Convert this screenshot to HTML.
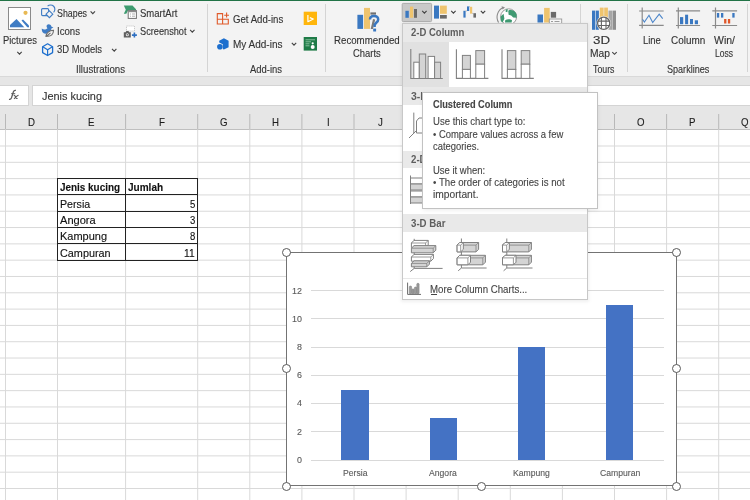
<!DOCTYPE html><html><head><meta charset="utf-8"><style>html,body{margin:0;padding:0;width:750px;height:500px;overflow:hidden;background:#fff;position:relative}body>div,body>svg{position:absolute}</style></head><body><div style="position:absolute;left:0px;top:0px;width:750px;height:1px;background:#217346"></div>
<div style="position:absolute;left:0px;top:1px;width:750px;height:75px;background:#f3f3f3"></div>
<div style="position:absolute;left:0px;top:76px;width:750px;height:1px;background:#d9d9d9"></div>
<div style="position:absolute;left:0px;top:77px;width:750px;height:30px;background:#e6e6e6"></div>
<div style="position:absolute;left:207px;top:4px;width:1px;height:68px;background:#d4d4d4"></div>
<div style="position:absolute;left:325px;top:4px;width:1px;height:68px;background:#d4d4d4"></div>
<div style="position:absolute;left:580px;top:4px;width:1px;height:68px;background:#d4d4d4"></div>
<div style="position:absolute;left:627px;top:4px;width:1px;height:68px;background:#d4d4d4"></div>
<div style="position:absolute;left:747px;top:4px;width:1px;height:68px;background:#d4d4d4"></div>
<div style="position:absolute;left:2.70px;top:35.91px;font:normal 10.32px/10.32px 'Liberation Sans',sans-serif;color:#333;white-space:pre;transform-origin:0 0;-webkit-text-stroke:0.12px #333;transform:scaleX(0.9100)">Pictures</div>
<div style="position:absolute;left:57.00px;top:8.81px;font:normal 10.32px/10.32px 'Liberation Sans',sans-serif;color:#333;white-space:pre;transform-origin:0 0;-webkit-text-stroke:0.12px #333;transform:scaleX(0.8577)">Shapes</div>
<div style="position:absolute;left:57.00px;top:27.11px;font:normal 10.32px/10.32px 'Liberation Sans',sans-serif;color:#333;white-space:pre;transform-origin:0 0;-webkit-text-stroke:0.12px #333;transform:scaleX(0.9331)">Icons</div>
<div style="position:absolute;left:57.00px;top:45.11px;font:normal 10.32px/10.32px 'Liberation Sans',sans-serif;color:#333;white-space:pre;transform-origin:0 0;-webkit-text-stroke:0.12px #333;transform:scaleX(0.9129)">3D Models</div>
<div style="position:absolute;left:76.00px;top:64.61px;font:normal 10.32px/10.32px 'Liberation Sans',sans-serif;color:#333;white-space:pre;transform-origin:0 0;-webkit-text-stroke:0.12px #333;transform:scaleX(0.9395)">Illustrations</div>
<div style="position:absolute;left:139.50px;top:8.61px;font:normal 10.32px/10.32px 'Liberation Sans',sans-serif;color:#333;white-space:pre;transform-origin:0 0;-webkit-text-stroke:0.12px #333;transform:scaleX(0.9218)">SmartArt</div>
<div style="position:absolute;left:139.50px;top:27.11px;font:normal 10.32px/10.32px 'Liberation Sans',sans-serif;color:#333;white-space:pre;transform-origin:0 0;-webkit-text-stroke:0.12px #333;transform:scaleX(0.8914)">Screenshot</div>
<div style="position:absolute;left:232.50px;top:14.91px;font:normal 10.32px/10.32px 'Liberation Sans',sans-serif;color:#333;white-space:pre;transform-origin:0 0;-webkit-text-stroke:0.12px #333;transform:scaleX(0.9329)">Get Add-ins</div>
<div style="position:absolute;left:232.50px;top:40.11px;font:normal 10.32px/10.32px 'Liberation Sans',sans-serif;color:#333;white-space:pre;transform-origin:0 0;-webkit-text-stroke:0.12px #333;transform:scaleX(0.9694)">My Add-ins</div>
<div style="position:absolute;left:250.00px;top:64.61px;font:normal 10.32px/10.32px 'Liberation Sans',sans-serif;color:#333;white-space:pre;transform-origin:0 0;-webkit-text-stroke:0.12px #333;transform:scaleX(0.9152)">Add-ins</div>
<div style="position:absolute;left:334.00px;top:35.81px;font:normal 10.32px/10.32px 'Liberation Sans',sans-serif;color:#333;white-space:pre;transform-origin:0 0;-webkit-text-stroke:0.12px #333;transform:scaleX(0.9395)">Recommended</div>
<div style="position:absolute;left:353.30px;top:48.81px;font:normal 10.32px/10.32px 'Liberation Sans',sans-serif;color:#333;white-space:pre;transform-origin:0 0;-webkit-text-stroke:0.12px #333;transform:scaleX(0.9120)">Charts</div>
<div style="position:absolute;left:593.00px;top:36.11px;font:normal 10.32px/10.32px 'Liberation Sans',sans-serif;color:#333;white-space:pre;transform-origin:0 0;-webkit-text-stroke:0.12px #333;transform:scaleX(1.2896)">3D</div>
<div style="position:absolute;left:590.00px;top:49.11px;font:normal 10.32px/10.32px 'Liberation Sans',sans-serif;color:#333;white-space:pre;transform-origin:0 0;-webkit-text-stroke:0.12px #333;transform:scaleX(0.9970)">Map</div>
<div style="position:absolute;left:593.00px;top:64.61px;font:normal 10.32px/10.32px 'Liberation Sans',sans-serif;color:#333;white-space:pre;transform-origin:0 0;-webkit-text-stroke:0.12px #333;transform:scaleX(0.8526)">Tours</div>
<div style="position:absolute;left:642.50px;top:35.81px;font:normal 10.32px/10.32px 'Liberation Sans',sans-serif;color:#333;white-space:pre;transform-origin:0 0;-webkit-text-stroke:0.12px #333;transform:scaleX(0.9130)">Line</div>
<div style="position:absolute;left:670.80px;top:35.81px;font:normal 10.32px/10.32px 'Liberation Sans',sans-serif;color:#333;white-space:pre;transform-origin:0 0;-webkit-text-stroke:0.12px #333;transform:scaleX(0.9624)">Column</div>
<div style="position:absolute;left:714.00px;top:35.81px;font:normal 10.32px/10.32px 'Liberation Sans',sans-serif;color:#333;white-space:pre;transform-origin:0 0;-webkit-text-stroke:0.12px #333;transform:scaleX(1.0182)">Win/</div>
<div style="position:absolute;left:715.00px;top:48.81px;font:normal 10.32px/10.32px 'Liberation Sans',sans-serif;color:#333;white-space:pre;transform-origin:0 0;-webkit-text-stroke:0.12px #333;transform:scaleX(0.8263)">Loss</div>
<div style="position:absolute;left:666.70px;top:64.61px;font:normal 10.32px/10.32px 'Liberation Sans',sans-serif;color:#333;white-space:pre;transform-origin:0 0;-webkit-text-stroke:0.12px #333;transform:scaleX(0.8785)">Sparklines</div>
<svg style="position:absolute;left:0;top:0" width="750" height="500"><rect x="8.5" y="7.5" width="22" height="22" fill="#fff" stroke="#8a8a8a" stroke-width="1"/><circle cx="25.5" cy="12.8" r="2.1" fill="#e8b954"/><path d="M10 27.5V25L16.5 19L24.5 27.5Z" fill="#3f7cc4"/><path d="M21.5 20.5L23 19.5L29 25.5V27.5H27.5Z" fill="#3f7cc4"/><rect x="9" y="27.6" width="21" height="1.4" fill="#fff"/><rect x="402.2" y="3.4" width="29.4" height="18.2" rx="1" fill="#c9c9c9" stroke="#ababab" stroke-width="1"/><rect x="405.4" y="10.8" width="3.4" height="7" fill="#3a78c1"/><rect x="410" y="6.6" width="3.2" height="11.2" fill="#efc46e"/><rect x="414" y="9" width="3" height="8.8" fill="#6a6a6a"/><path d="M17.3 51.9L19.5 54.1L21.7 51.9" fill="none" stroke="#444" stroke-width="1.15"/><path d="M90.6 11.4L92.8 13.6L95.0 11.4" fill="none" stroke="#444" stroke-width="1.15"/><path d="M112.0 48.9L114.2 51.1L116.4 48.9" fill="none" stroke="#444" stroke-width="1.15"/><path d="M190.10000000000002 29.9L192.3 32.1L194.5 29.9" fill="none" stroke="#444" stroke-width="1.15"/><path d="M291.8 42.9L294 45.1L296.2 42.9" fill="none" stroke="#444" stroke-width="1.15"/><path d="M422.2 10.9L424.4 13.1L426.59999999999997 10.9" fill="none" stroke="#444" stroke-width="1.15"/><path d="M451.2 10.9L453.4 13.1L455.59999999999997 10.9" fill="none" stroke="#444" stroke-width="1.15"/><path d="M480.8 10.9L483 13.1L485.2 10.9" fill="none" stroke="#444" stroke-width="1.15"/><path d="M612.3 52.1L614.5 54.300000000000004L616.7 52.1" fill="none" stroke="#444" stroke-width="1.15"/><rect x="41.6" y="8.6" width="7" height="7" rx="1" fill="none" stroke="#3f7cc4" stroke-width="1.1"/><path d="M47.6 6.2A4.1 4.1 0 1 1 53.6 12.3" fill="none" stroke="#3f7cc4" stroke-width="1.1"/><path d="M49.4 10.8L52.8 14.2L49.4 17.6L46 14.2Z" fill="#f3f3f3" stroke="#3f7cc4" stroke-width="1.1"/><path d="M41.8 28.6C43 29.5 44.5 29.8 46 29.2L47.5 28.2C46.6 27.4 46.3 26.4 46.8 25.3C47.5 24.2 49.2 23.9 50.3 24.8C51 25.3 51.3 25.9 51.3 26.5L53.4 27.6L51.4 28.6C51.3 31.2 49 33.8 45.4 33.8C43 33.8 41.6 31.6 41.8 28.6Z" fill="#3f7cc4"/><path d="M45.8 36.8C46.4 33 48.6 30.5 53.5 30.3C53.5 34.3 51 36.6 47.2 36.2M46.3 36.5L50.5 32.8" fill="#f3f3f3" stroke="#6d6d6d" stroke-width="1.1"/><path d="M47.6 43.8L52.6 46.7V52.6L47.6 55.5L42.6 52.6V46.7Z" fill="none" stroke="#1d6fce" stroke-width="1.3" stroke-linejoin="round"/><path d="M42.8 46.8L47.6 49.7L52.4 46.8M47.6 49.7V55.3" fill="none" stroke="#1d6fce" stroke-width="1.2"/><path d="M123.8 5.6H132.5L136 9.2V10.5H128L126.3 13.8H123.8L125.8 9.7Z" fill="#3d9b6f"/><rect x="128.2" y="10.6" width="8.2" height="7.8" fill="#fff" stroke="#707070" stroke-width="1"/><rect x="128.2" y="10.6" width="8.2" height="1.6" fill="#8c8c8c"/><path d="M130 14H131M132 14H135M130 16.2H131M132 16.2H135" stroke="#8c8c8c" stroke-width="0.7"/><rect x="126.5" y="26" width="8" height="5" fill="#fff" stroke="#b5b5b5" stroke-width="0.7" stroke-dasharray="1.2 0.8"/><path d="M123.8 32.2H125.5L126.4 31H128.4L129.2 32.2H130.8V37.4H123.8Z" fill="#5f5f5f"/><circle cx="127.3" cy="34.7" r="1.5" fill="#f3f3f3"/><circle cx="127.3" cy="34.7" r="0.8" fill="#5f5f5f"/><path d="M131.9 35.1H136.9M134.4 32.6V37.6" stroke="#2e6fc1" stroke-width="1.6"/><path d="M217.3 13.6H222.6V19.3H228.3V24H217.3Z M217.3 19.3H222.6 M222.6 19.3V24" fill="none" stroke="#e05a2a" stroke-width="1.1"/><path d="M224.2 15.2H229 M226.6 12.6V17.6" stroke="#e05a2a" stroke-width="1.1"/><path d="M219.2 40.8L223.9 38.3L228.6 40.8V47.2L223.9 49.6L222.8 49.1V44.3L219.2 42.4Z" fill="#1d6fce"/><circle cx="219.9" cy="46.8" r="2.8" fill="#1d6fce"/><rect x="303.7" y="11.7" width="13.3" height="13.3" fill="#ffb60c"/><path d="M307.9 15V21.7L313.3 19L309.8 17.6" fill="none" stroke="#fff" stroke-width="1.2" stroke-linejoin="round"/><rect x="303.7" y="37" width="13.3" height="13.6" fill="#1e7b47"/><path d="M305.5 39.8H315M305.5 41.8H311M305.5 43.8H309.5M305.5 45.8H309.5" stroke="#9fd0b1" stroke-width="0.8"/><circle cx="312.7" cy="43.3" r="1.1" fill="#fff"/><circle cx="312.7" cy="47" r="2" fill="#fff"/><rect x="357.4" y="14.8" width="5.7" height="14.1" fill="#3a78c1"/><rect x="364" y="7.9" width="6" height="21" fill="#efc46e"/><rect x="370.4" y="12.4" width="5.6" height="2.2" fill="#707070"/><path d="M370.7 28.9L373 19L375.2 19.5L373 28.9Z" fill="#7a7a7a"/><path d="M370 19.5C370 17 371.8 15.9 373.9 15.9C376.3 15.9 378.2 17.2 378.2 19.4C378.2 22.4 374.6 22.6 374.6 25.8V27" fill="none" stroke="#3a78c1" stroke-width="2.5"/><rect x="373.2" y="28.6" width="2.9" height="2.9" fill="#3a78c1"/><rect x="434" y="5.6" width="5" height="13" fill="#3a78c1"/><rect x="440" y="5.6" width="6.8" height="8.2" fill="#efc46e"/><rect x="440" y="15" width="6.8" height="3.6" fill="#6a6a6a"/><rect x="463.4" y="10.8" width="2.2" height="6.8" fill="#3a78c1"/><rect x="467" y="6.4" width="2.2" height="4.6" fill="#3a78c1"/><rect x="470" y="6.8" width="2.2" height="6.8" fill="#efc46e"/><rect x="473.4" y="13.2" width="2.6" height="4.4" fill="#6a6a6a"/><path d="M465.6 10.9H467M469.2 6.7H470M472.2 13.4H473.4" stroke="#888" stroke-width="0.5"/><path d="M498.6 22.5A10.2 10.2 0 0 1 503.5 7.6" fill="none" stroke="#8c8c8c" stroke-width="1.1"/><path d="M501.5 6.2L505 7.3L502.6 9.6Z" fill="#8c8c8c"/><circle cx="508.6" cy="16.8" r="8" fill="#fff" stroke="#9a9a9a" stroke-width="1"/><path d="M508.2 10.6C511.5 9.2 515.5 10.8 516.6 14.5L516.6 17.8L513.2 17.4L511.2 15.6L508.6 14.8Z M505.8 9.6L507.8 9.3L507.4 12.2L505.6 11.8Z M500.6 16.4L503.6 13.8L504.4 18.8L502.6 22.4L500.8 21Z M505.2 20.2C507.2 19 510.6 19.2 512 20.2L511.6 22.6H505Z" fill="#3f9a72"/><rect x="537.5" y="14.5" width="5.5" height="8" fill="#3a78c1"/><rect x="544.1" y="7.9" width="5.6" height="14.6" fill="#efc46e"/><rect x="550.8" y="11.9" width="5.3" height="5.8" fill="#6a6a6a"/><rect x="549.3" y="19" width="12.4" height="5" fill="#f8f8f8" stroke="#9a9a9a" stroke-width="0.9"/><path d="M551 21.5H553M554.5 21.5H559.5" stroke="#888" stroke-width="0.8"/><rect x="592" y="10.6" width="3.2" height="19.2" fill="#3a78c1"/><rect x="595.8" y="10.6" width="3.1" height="19.2" fill="#3a78c1"/><rect x="599.8" y="7.6" width="3.8" height="12" fill="#efc46e"/><rect x="604.2" y="7.6" width="3.7" height="12" fill="#efc46e"/><rect x="608.5" y="10.6" width="3.6" height="19.2" fill="#a6a6a6"/><rect x="612.5" y="10.6" width="3.5" height="19.2" fill="#8f8f8f"/><circle cx="603.7" cy="23.3" r="7.2" fill="#f3f3f3"/><circle cx="603.7" cy="23.3" r="6.1" fill="#fff" stroke="#666" stroke-width="1.3"/><path d="M598 21.1H609.4M598 25.5H609.4M601.4 17.5V29.1M606 17.5V29.1" stroke="#666" stroke-width="1.1"/><path d="M639.1 11H663.7M639.1 25.4H663.7M642.2 7.4V28.6" stroke="#8a8a8a" stroke-width="1.2"/><path d="M642.5 19.3L644.4 22L649 15.3L652.7 22.6L659.2 14.2L662.7 18.7" fill="none" stroke="#4b85c9" stroke-width="1.1"/><path d="M676 10.8H700.1M676 25.5H700.1M678.3 7.4V28.6" stroke="#8a8a8a" stroke-width="1.2"/><rect x="680" y="17.1" width="3.2000000000000455" height="7.099999999999998" fill="#3a78c1"/><rect x="685.1" y="14.7" width="3.0" height="9.5" fill="#3a78c1"/><rect x="690" y="19" width="3" height="5.199999999999999" fill="#3a78c1"/><rect x="694.8" y="20.3" width="3.2000000000000455" height="3.8999999999999986" fill="#3a78c1"/><path d="M712.3 10.8H737.1M712.3 25.5H737.1M715.5 7.4V28.6" stroke="#8a8a8a" stroke-width="1.2"/><rect x="716.9" y="13" width="2.3" height="4.6" fill="#3a78c1"/><rect x="721" y="13" width="2.3" height="4.6" fill="#3a78c1"/><rect x="732.3" y="13" width="2.3" height="4.6" fill="#3a78c1"/><rect x="724.1" y="19" width="2.3" height="4.5" fill="#e0572a"/><rect x="727.9" y="19" width="2.3" height="4.5" fill="#e0572a"/></svg>
<div style="position:absolute;left:-2px;top:85px;width:30.5px;height:21px;background:#fff;border:1px solid #d4d4d4;box-sizing:border-box"></div>
<div style="position:absolute;left:32px;top:85px;width:730px;height:21px;background:#fff;border:1px solid #d4d4d4;box-sizing:border-box"></div>
<div style="position:absolute;left:41.70px;top:91.09px;font:normal 11.05px/11.05px 'Liberation Sans',sans-serif;color:#333;white-space:pre;transform-origin:0 0;-webkit-text-stroke:0.12px #333;transform:scaleX(0.9870)">Jenis kucing</div>
<svg style="position:absolute;left:0;top:0" width="750" height="500"><path d="M9 99.4C10.3 99.7 11 99.2 11.5 97.8L13.4 91.8C13.8 90.6 14.6 90.1 15.9 90.4" fill="none" stroke="#5a5a5a" stroke-width="1.25"/><path d="M11.2 93.7H15.2" stroke="#5a5a5a" stroke-width="1"/><path d="M13.6 95.2C14.6 95 15.2 95.6 15.6 97.2C15.9 98.4 16.6 98.8 17.6 98.4M18.6 95.2C17.4 95.3 15.4 97.3 14 98.8" fill="none" stroke="#5a5a5a" stroke-width="1.05"/></svg>
<div style="position:absolute;left:0px;top:107px;width:750px;height:22px;background:#e6e6e6"></div>
<div style="position:absolute;left:0px;top:129px;width:750px;height:1px;background:#bfbfbf"></div>
<svg style="position:absolute;left:0;top:0" width="750" height="500"><path d="M5.5 114V129" stroke="#b8b8b8" stroke-width="1"/><path d="M57.5 114V129" stroke="#b8b8b8" stroke-width="1"/><path d="M125.6 114V129" stroke="#b8b8b8" stroke-width="1"/><path d="M197.7 114V129" stroke="#b8b8b8" stroke-width="1"/><path d="M249.79999999999998 114V129" stroke="#b8b8b8" stroke-width="1"/><path d="M301.9 114V129" stroke="#b8b8b8" stroke-width="1"/><path d="M354.0 114V129" stroke="#b8b8b8" stroke-width="1"/><path d="M406.1 114V129" stroke="#b8b8b8" stroke-width="1"/><path d="M458.2 114V129" stroke="#b8b8b8" stroke-width="1"/><path d="M510.3 114V129" stroke="#b8b8b8" stroke-width="1"/><path d="M562.4 114V129" stroke="#b8b8b8" stroke-width="1"/><path d="M614.5 114V129" stroke="#b8b8b8" stroke-width="1"/><path d="M666.6 114V129" stroke="#b8b8b8" stroke-width="1"/><path d="M718.7 114V129" stroke="#b8b8b8" stroke-width="1"/><path d="M770.8 114V129" stroke="#b8b8b8" stroke-width="1"/><path d="M0 146.00H750" stroke="#d9d9d9" stroke-width="1"/><path d="M0 162.31H750" stroke="#d9d9d9" stroke-width="1"/><path d="M0 178.62H750" stroke="#d9d9d9" stroke-width="1"/><path d="M0 194.93H750" stroke="#d9d9d9" stroke-width="1"/><path d="M0 211.24H750" stroke="#d9d9d9" stroke-width="1"/><path d="M0 227.55H750" stroke="#d9d9d9" stroke-width="1"/><path d="M0 243.86H750" stroke="#d9d9d9" stroke-width="1"/><path d="M0 260.17H750" stroke="#d9d9d9" stroke-width="1"/><path d="M0 276.48H750" stroke="#d9d9d9" stroke-width="1"/><path d="M0 292.79H750" stroke="#d9d9d9" stroke-width="1"/><path d="M0 309.10H750" stroke="#d9d9d9" stroke-width="1"/><path d="M0 325.41H750" stroke="#d9d9d9" stroke-width="1"/><path d="M0 341.72H750" stroke="#d9d9d9" stroke-width="1"/><path d="M0 358.03H750" stroke="#d9d9d9" stroke-width="1"/><path d="M0 374.34H750" stroke="#d9d9d9" stroke-width="1"/><path d="M0 390.65H750" stroke="#d9d9d9" stroke-width="1"/><path d="M0 406.96H750" stroke="#d9d9d9" stroke-width="1"/><path d="M0 423.27H750" stroke="#d9d9d9" stroke-width="1"/><path d="M0 439.58H750" stroke="#d9d9d9" stroke-width="1"/><path d="M0 455.89H750" stroke="#d9d9d9" stroke-width="1"/><path d="M0 472.20H750" stroke="#d9d9d9" stroke-width="1"/><path d="M0 488.51H750" stroke="#d9d9d9" stroke-width="1"/><path d="M5.5 129.5V500" stroke="#d9d9d9" stroke-width="1"/><path d="M57.5 129.5V500" stroke="#d9d9d9" stroke-width="1"/><path d="M125.6 129.5V500" stroke="#d9d9d9" stroke-width="1"/><path d="M197.7 129.5V500" stroke="#d9d9d9" stroke-width="1"/><path d="M249.79999999999998 129.5V500" stroke="#d9d9d9" stroke-width="1"/><path d="M301.9 129.5V500" stroke="#d9d9d9" stroke-width="1"/><path d="M354.0 129.5V500" stroke="#d9d9d9" stroke-width="1"/><path d="M406.1 129.5V500" stroke="#d9d9d9" stroke-width="1"/><path d="M458.2 129.5V500" stroke="#d9d9d9" stroke-width="1"/><path d="M510.3 129.5V500" stroke="#d9d9d9" stroke-width="1"/><path d="M562.4 129.5V500" stroke="#d9d9d9" stroke-width="1"/><path d="M614.5 129.5V500" stroke="#d9d9d9" stroke-width="1"/><path d="M666.6 129.5V500" stroke="#d9d9d9" stroke-width="1"/><path d="M718.7 129.5V500" stroke="#d9d9d9" stroke-width="1"/><path d="M770.8 129.5V500" stroke="#d9d9d9" stroke-width="1"/></svg>
<div style="position:absolute;left:28.01px;top:117.04px;font:normal 10.76px/10.76px 'Liberation Sans',sans-serif;color:#1e1e1e;white-space:pre;transform-origin:0 0;-webkit-text-stroke:0.12px #1e1e1e;transform:scaleX(0.9000)">D</div>
<div style="position:absolute;left:88.32px;top:117.04px;font:normal 10.76px/10.76px 'Liberation Sans',sans-serif;color:#1e1e1e;white-space:pre;transform-origin:0 0;-webkit-text-stroke:0.12px #1e1e1e;transform:scaleX(0.9000)">E</div>
<div style="position:absolute;left:158.70px;top:117.04px;font:normal 10.76px/10.76px 'Liberation Sans',sans-serif;color:#1e1e1e;white-space:pre;transform-origin:0 0;-webkit-text-stroke:0.12px #1e1e1e;transform:scaleX(0.9000)">F</div>
<div style="position:absolute;left:219.99px;top:117.04px;font:normal 10.76px/10.76px 'Liberation Sans',sans-serif;color:#1e1e1e;white-space:pre;transform-origin:0 0;-webkit-text-stroke:0.12px #1e1e1e;transform:scaleX(0.9000)">G</div>
<div style="position:absolute;left:272.36px;top:117.04px;font:normal 10.76px/10.76px 'Liberation Sans',sans-serif;color:#1e1e1e;white-space:pre;transform-origin:0 0;-webkit-text-stroke:0.12px #1e1e1e;transform:scaleX(0.9000)">H</div>
<div style="position:absolute;left:326.61px;top:117.04px;font:normal 10.76px/10.76px 'Liberation Sans',sans-serif;color:#1e1e1e;white-space:pre;transform-origin:0 0;-webkit-text-stroke:0.12px #1e1e1e;transform:scaleX(0.9000)">I</div>
<div style="position:absolute;left:377.63px;top:117.04px;font:normal 10.76px/10.76px 'Liberation Sans',sans-serif;color:#1e1e1e;white-space:pre;transform-origin:0 0;-webkit-text-stroke:0.12px #1e1e1e;transform:scaleX(0.9000)">J</div>
<div style="position:absolute;left:428.92px;top:117.04px;font:normal 10.76px/10.76px 'Liberation Sans',sans-serif;color:#1e1e1e;white-space:pre;transform-origin:0 0;-webkit-text-stroke:0.12px #1e1e1e;transform:scaleX(0.9000)">K</div>
<div style="position:absolute;left:481.56px;top:117.04px;font:normal 10.76px/10.76px 'Liberation Sans',sans-serif;color:#1e1e1e;white-space:pre;transform-origin:0 0;-webkit-text-stroke:0.12px #1e1e1e;transform:scaleX(0.9000)">L</div>
<div style="position:absolute;left:532.32px;top:117.04px;font:normal 10.76px/10.76px 'Liberation Sans',sans-serif;color:#1e1e1e;white-space:pre;transform-origin:0 0;-webkit-text-stroke:0.12px #1e1e1e;transform:scaleX(0.9000)">M</div>
<div style="position:absolute;left:584.96px;top:117.04px;font:normal 10.76px/10.76px 'Liberation Sans',sans-serif;color:#1e1e1e;white-space:pre;transform-origin:0 0;-webkit-text-stroke:0.12px #1e1e1e;transform:scaleX(0.9000)">N</div>
<div style="position:absolute;left:636.79px;top:117.04px;font:normal 10.76px/10.76px 'Liberation Sans',sans-serif;color:#1e1e1e;white-space:pre;transform-origin:0 0;-webkit-text-stroke:0.12px #1e1e1e;transform:scaleX(0.9000)">O</div>
<div style="position:absolute;left:689.42px;top:117.04px;font:normal 10.76px/10.76px 'Liberation Sans',sans-serif;color:#1e1e1e;white-space:pre;transform-origin:0 0;-webkit-text-stroke:0.12px #1e1e1e;transform:scaleX(0.9000)">P</div>
<div style="position:absolute;left:740.99px;top:117.04px;font:normal 10.76px/10.76px 'Liberation Sans',sans-serif;color:#1e1e1e;white-space:pre;transform-origin:0 0;-webkit-text-stroke:0.12px #1e1e1e;transform:scaleX(0.9000)">Q</div>
<div style="position:absolute;left:57px;top:178px;width:1px;height:83px;background:#222"></div>
<div style="position:absolute;left:125px;top:178px;width:1px;height:83px;background:#222"></div>
<div style="position:absolute;left:197px;top:178px;width:1px;height:83px;background:#222"></div>
<div style="position:absolute;left:57px;top:178px;width:141px;height:1px;background:#222"></div>
<div style="position:absolute;left:57px;top:194px;width:141px;height:1px;background:#222"></div>
<div style="position:absolute;left:57px;top:211px;width:141px;height:1px;background:#222"></div>
<div style="position:absolute;left:57px;top:227px;width:141px;height:1px;background:#222"></div>
<div style="position:absolute;left:57px;top:243px;width:141px;height:1px;background:#222"></div>
<div style="position:absolute;left:57px;top:260px;width:141px;height:1px;background:#222"></div>
<div style="position:absolute;left:59.50px;top:183.26px;font:bold 10.03px/10.03px 'Liberation Sans',sans-serif;color:#111;white-space:pre;transform-origin:0 0;-webkit-text-stroke:0.12px #111;transform:scaleX(0.9889)">Jenis kucing</div>
<div style="position:absolute;left:127.90px;top:183.26px;font:bold 10.03px/10.03px 'Liberation Sans',sans-serif;color:#111;white-space:pre;transform-origin:0 0;-webkit-text-stroke:0.12px #111;transform:scaleX(1.0010)">Jumlah</div>
<div style="position:absolute;left:59.50px;top:199.56px;font:normal 10.03px/10.03px 'Liberation Sans',sans-serif;color:#111;white-space:pre;transform-origin:0 0;-webkit-text-stroke:0.12px #111;transform:scaleX(1.0638)">Persia</div>
<div style="position:absolute;left:189.70px;top:199.56px;font:normal 10.03px/10.03px 'Liberation Sans',sans-serif;color:#111;white-space:pre;transform-origin:0 0;-webkit-text-stroke:0.12px #111;transform:scaleX(0.9515)">5</div>
<div style="position:absolute;left:59.50px;top:215.89px;font:normal 10.03px/10.03px 'Liberation Sans',sans-serif;color:#111;white-space:pre;transform-origin:0 0;-webkit-text-stroke:0.12px #111;transform:scaleX(1.1054)">Angora</div>
<div style="position:absolute;left:189.70px;top:215.89px;font:normal 10.03px/10.03px 'Liberation Sans',sans-serif;color:#111;white-space:pre;transform-origin:0 0;-webkit-text-stroke:0.12px #111;transform:scaleX(0.9515)">3</div>
<div style="position:absolute;left:59.50px;top:232.22px;font:normal 10.03px/10.03px 'Liberation Sans',sans-serif;color:#111;white-space:pre;transform-origin:0 0;-webkit-text-stroke:0.12px #111;transform:scaleX(1.0962)">Kampung</div>
<div style="position:absolute;left:189.70px;top:232.22px;font:normal 10.03px/10.03px 'Liberation Sans',sans-serif;color:#111;white-space:pre;transform-origin:0 0;-webkit-text-stroke:0.12px #111;transform:scaleX(0.9515)">8</div>
<div style="position:absolute;left:59.50px;top:248.55px;font:normal 10.03px/10.03px 'Liberation Sans',sans-serif;color:#111;white-space:pre;transform-origin:0 0;-webkit-text-stroke:0.12px #111;transform:scaleX(1.0821)">Campuran</div>
<div style="position:absolute;left:184.40px;top:248.55px;font:normal 10.03px/10.03px 'Liberation Sans',sans-serif;color:#111;white-space:pre;transform-origin:0 0;-webkit-text-stroke:0.12px #111;transform:scaleX(1.0196)">11</div>
<div style="position:absolute;left:285.8px;top:251.8px;width:390.9px;height:234.4px;background:#fff;border:1.3px solid #737373;box-sizing:border-box"></div>
<div style="position:absolute;left:310.5px;top:460px;width:353.5px;height:1px;background:#d9d9d9"></div>
<div style="position:absolute;left:296.66px;top:454.78px;font:normal 9.88px/9.88px 'Liberation Sans',sans-serif;color:#595959;white-space:pre;transform-origin:0 0;-webkit-text-stroke:0.12px #595959;transform:scaleX(0.9000)">0</div>
<div style="position:absolute;left:310.5px;top:431px;width:353.5px;height:1px;background:#d9d9d9"></div>
<div style="position:absolute;left:296.66px;top:426.58px;font:normal 9.88px/9.88px 'Liberation Sans',sans-serif;color:#595959;white-space:pre;transform-origin:0 0;-webkit-text-stroke:0.12px #595959;transform:scaleX(0.9000)">2</div>
<div style="position:absolute;left:310.5px;top:403px;width:353.5px;height:1px;background:#d9d9d9"></div>
<div style="position:absolute;left:296.66px;top:398.38px;font:normal 9.88px/9.88px 'Liberation Sans',sans-serif;color:#595959;white-space:pre;transform-origin:0 0;-webkit-text-stroke:0.12px #595959;transform:scaleX(0.9000)">4</div>
<div style="position:absolute;left:310.5px;top:375px;width:353.5px;height:1px;background:#d9d9d9"></div>
<div style="position:absolute;left:296.66px;top:370.18px;font:normal 9.88px/9.88px 'Liberation Sans',sans-serif;color:#595959;white-space:pre;transform-origin:0 0;-webkit-text-stroke:0.12px #595959;transform:scaleX(0.9000)">6</div>
<div style="position:absolute;left:310.5px;top:347px;width:353.5px;height:1px;background:#d9d9d9"></div>
<div style="position:absolute;left:296.66px;top:341.98px;font:normal 9.88px/9.88px 'Liberation Sans',sans-serif;color:#595959;white-space:pre;transform-origin:0 0;-webkit-text-stroke:0.12px #595959;transform:scaleX(0.9000)">8</div>
<div style="position:absolute;left:310.5px;top:318px;width:353.5px;height:1px;background:#d9d9d9"></div>
<div style="position:absolute;left:291.71px;top:313.78px;font:normal 9.88px/9.88px 'Liberation Sans',sans-serif;color:#595959;white-space:pre;transform-origin:0 0;-webkit-text-stroke:0.12px #595959;transform:scaleX(0.9000)">10</div>
<div style="position:absolute;left:310.5px;top:290px;width:353.5px;height:1px;background:#d9d9d9"></div>
<div style="position:absolute;left:291.71px;top:285.58px;font:normal 9.88px/9.88px 'Liberation Sans',sans-serif;color:#595959;white-space:pre;transform-origin:0 0;-webkit-text-stroke:0.12px #595959;transform:scaleX(0.9000)">12</div>
<div style="position:absolute;left:341.4px;top:389.5px;width:27.2px;height:70.5px;background:#4472c4"></div>
<div style="position:absolute;left:342.78px;top:467.73px;font:normal 9.59px/9.59px 'Liberation Sans',sans-serif;color:#595959;white-space:pre;transform-origin:0 0;-webkit-text-stroke:0.12px #595959;transform:scaleX(0.9000)">Persia</div>
<div style="position:absolute;left:429.6px;top:417.7px;width:27.2px;height:42.30000000000001px;background:#4472c4"></div>
<div style="position:absolute;left:429.30px;top:467.73px;font:normal 9.59px/9.59px 'Liberation Sans',sans-serif;color:#595959;white-space:pre;transform-origin:0 0;-webkit-text-stroke:0.12px #595959;transform:scaleX(0.9000)">Angora</div>
<div style="position:absolute;left:518px;top:347.2px;width:27.2px;height:112.80000000000001px;background:#4472c4"></div>
<div style="position:absolute;left:513.15px;top:467.73px;font:normal 9.59px/9.59px 'Liberation Sans',sans-serif;color:#595959;white-space:pre;transform-origin:0 0;-webkit-text-stroke:0.12px #595959;transform:scaleX(0.9000)">Kampung</div>
<div style="position:absolute;left:606.2px;top:304.9px;width:27.2px;height:155.10000000000002px;background:#4472c4"></div>
<div style="position:absolute;left:599.68px;top:467.73px;font:normal 9.59px/9.59px 'Liberation Sans',sans-serif;color:#595959;white-space:pre;transform-origin:0 0;-webkit-text-stroke:0.12px #595959;transform:scaleX(0.9000)">Campuran</div>
<div style="position:absolute;left:281.5px;top:247.5px;width:9px;height:9px;border-radius:50%;background:#fff;border:1.6px solid #595959;box-sizing:border-box"></div>
<div style="position:absolute;left:476.5px;top:247.5px;width:9px;height:9px;border-radius:50%;background:#fff;border:1.6px solid #595959;box-sizing:border-box"></div>
<div style="position:absolute;left:672.0px;top:247.5px;width:9px;height:9px;border-radius:50%;background:#fff;border:1.6px solid #595959;box-sizing:border-box"></div>
<div style="position:absolute;left:281.5px;top:364.0px;width:9px;height:9px;border-radius:50%;background:#fff;border:1.6px solid #595959;box-sizing:border-box"></div>
<div style="position:absolute;left:672.0px;top:364.0px;width:9px;height:9px;border-radius:50%;background:#fff;border:1.6px solid #595959;box-sizing:border-box"></div>
<div style="position:absolute;left:281.5px;top:481.5px;width:9px;height:9px;border-radius:50%;background:#fff;border:1.6px solid #595959;box-sizing:border-box"></div>
<div style="position:absolute;left:476.5px;top:481.5px;width:9px;height:9px;border-radius:50%;background:#fff;border:1.6px solid #595959;box-sizing:border-box"></div>
<div style="position:absolute;left:672.0px;top:481.5px;width:9px;height:9px;border-radius:50%;background:#fff;border:1.6px solid #595959;box-sizing:border-box"></div>
<div style="position:absolute;left:401px;top:22.5px;width:187.5px;height:279.7px;background:rgba(0,0,0,0.06);filter:blur(1.5px)"></div>
<div style="position:absolute;left:402px;top:22.5px;width:185.5px;height:277.7px;background:#fff;border:1px solid #c8c8c8;box-sizing:border-box"></div>
<div style="position:absolute;left:403px;top:23.5px;width:183.5px;height:18.0px;background:#e9e9e9"></div>
<div style="position:absolute;left:411.30px;top:26.74px;font:bold 10.76px/10.76px 'Liberation Sans',sans-serif;color:#5e5e5e;white-space:pre;transform-origin:0 0;-webkit-text-stroke:0px #5e5e5e;transform:scaleX(0.8853)">2-D Column</div>
<div style="position:absolute;left:403px;top:41.5px;width:46px;height:45.5px;background:#e1e1e1"></div>
<div style="position:absolute;left:403px;top:87px;width:183.5px;height:18px;background:#e9e9e9"></div>
<div style="position:absolute;left:411.30px;top:91.04px;font:bold 10.76px/10.76px 'Liberation Sans',sans-serif;color:#5e5e5e;white-space:pre;transform-origin:0 0;-webkit-text-stroke:0px #5e5e5e;transform:scaleX(0.9732)">3-D Column</div>
<div style="position:absolute;left:403px;top:151px;width:183.5px;height:17px;background:#e9e9e9"></div>
<div style="position:absolute;left:411.30px;top:154.04px;font:bold 10.76px/10.76px 'Liberation Sans',sans-serif;color:#5e5e5e;white-space:pre;transform-origin:0 0;-webkit-text-stroke:0px #5e5e5e;transform:scaleX(0.8997)">2-D Bar</div>
<div style="position:absolute;left:403px;top:214px;width:183.5px;height:17.5px;background:#e9e9e9"></div>
<div style="position:absolute;left:411.30px;top:217.64px;font:bold 10.76px/10.76px 'Liberation Sans',sans-serif;color:#5e5e5e;white-space:pre;transform-origin:0 0;-webkit-text-stroke:0px #5e5e5e;transform:scaleX(0.8997)">3-D Bar</div>
<div style="position:absolute;left:403px;top:278px;width:183.5px;height:1px;background:#e8e8e8"></div>
<div style="position:absolute;left:430.20px;top:283.64px;font:normal 10.76px/10.76px 'Liberation Sans',sans-serif;color:#444;white-space:pre;transform-origin:0 0;-webkit-text-stroke:0.12px #444;transform:scaleX(0.8998)">More Column Charts...</div>
<div style="position:absolute;left:430.5px;top:293.5px;width:6px;height:0.8px;background:#444"></div>
<svg style="position:absolute;left:0;top:0" width="750" height="500"><path d="M410.8 48.9V78.5H442.8" fill="none" stroke="#808080" stroke-width="1.1"/><rect x="413.8" y="62.2" width="5.5" height="16.299999999999997" fill="#fff" stroke="#808080" stroke-width="1"/><rect x="419.3" y="54" width="6.399999999999977" height="24.5" fill="#d4d4d4" stroke="#808080" stroke-width="1"/><rect x="428.1" y="56.4" width="6.5" height="22.1" fill="#fff" stroke="#808080" stroke-width="1"/><rect x="434.6" y="62.2" width="6.0" height="16.299999999999997" fill="#d4d4d4" stroke="#808080" stroke-width="1"/><path d="M456.4 49.2V78.4H488.4" fill="none" stroke="#808080" stroke-width="1.1"/><rect x="462.4" y="55.4" width="8.0" height="14.000000000000007" fill="#d4d4d4" stroke="#808080" stroke-width="1"/><rect x="462.4" y="69.4" width="8.0" height="9.0" fill="#fff" stroke="#808080" stroke-width="1"/><rect x="475.8" y="50.6" width="8.800000000000011" height="13.600000000000001" fill="#d4d4d4" stroke="#808080" stroke-width="1"/><rect x="475.8" y="64.2" width="8.800000000000011" height="14.200000000000003" fill="#fff" stroke="#808080" stroke-width="1"/><path d="M502 49.2V78.4H533.8" fill="none" stroke="#808080" stroke-width="1.1"/><rect x="507.4" y="50.6" width="8.399999999999977" height="18.800000000000004" fill="#d4d4d4" stroke="#808080" stroke-width="1"/><rect x="507.4" y="69.4" width="8.399999999999977" height="9.0" fill="#fff" stroke="#808080" stroke-width="1"/><rect x="521.2" y="50.6" width="8.599999999999909" height="13.600000000000001" fill="#d4d4d4" stroke="#808080" stroke-width="1"/><rect x="521.2" y="64.2" width="8.599999999999909" height="14.200000000000003" fill="#fff" stroke="#808080" stroke-width="1"/><path d="M413.8 112.6V133.3M409 138L416 131" fill="none" stroke="#808080" stroke-width="1"/><path d="M416.5 121L419 118H424V133H416.5Z" fill="#fff" stroke="#808080" stroke-width="1"/><path d="M410.5 175.5V204" fill="none" stroke="#808080" stroke-width="1"/><rect x="410.5" y="178" width="14" height="6" fill="#fff" stroke="#808080" stroke-width="1"/><rect x="410.5" y="184" width="14" height="6" fill="#d4d4d4" stroke="#808080" stroke-width="1"/><rect x="410.5" y="191" width="14" height="6" fill="#fff" stroke="#808080" stroke-width="1"/><rect x="410.5" y="197" width="14" height="6" fill="#d4d4d4" stroke="#808080" stroke-width="1"/><path d="M410.2 271.6L414.2 268.4H442.6M414.2 238.8V268.4" fill="none" stroke="#808080" stroke-width="1"/><path d="M411.4 243.0L414.0 240.4H428.2V245.0L425.59999999999997 247.6H411.4Z" fill="#fff" stroke="#808080" stroke-width="1"/><path d="M411.4 243.0H425.59999999999997L428.2 240.4M425.59999999999997 243.0V247.6" fill="none" stroke="#808080" stroke-width="0.8"/><path d="M411.4 248.2L414.0 245.6H435.8V250.20000000000002L433.2 252.8H411.4Z" fill="#d4d4d4" stroke="#808080" stroke-width="1"/><path d="M411.4 248.2H433.2L435.8 245.6M433.2 248.2V252.8" fill="none" stroke="#808080" stroke-width="0.8"/><path d="M411.4 257.0L414.0 254.4H433.4V258.59999999999997L430.79999999999995 261.2H411.4Z" fill="#fff" stroke="#808080" stroke-width="1"/><path d="M411.4 257.0H430.79999999999995L433.4 254.4M430.79999999999995 257.0V261.2" fill="none" stroke="#808080" stroke-width="0.8"/><path d="M411.4 263.40000000000003L414.0 260.8H429.4V264.2L426.79999999999995 266.8H411.4Z" fill="#d4d4d4" stroke="#808080" stroke-width="1"/><path d="M411.4 263.40000000000003H426.79999999999995L429.4 260.8M426.79999999999995 263.40000000000003V266.8" fill="none" stroke="#808080" stroke-width="0.8"/><path d="M458.2 270.8L461.4 268H486.6M461.4 238.5V268" fill="none" stroke="#808080" stroke-width="1"/><path d="M457.1 245.1L459.70000000000005 242.5H478.6V249.3L476.0 251.9H457.1Z" fill="#d4d4d4" stroke="#808080" stroke-width="1"/><path d="M457.1 245.1H476.0L478.6 242.5M476.0 245.1V251.9" fill="none" stroke="#808080" stroke-width="0.8"/><path d="M457.1 245.1L459.70000000000005 242.5H463.3V249.3L460.7 251.9H457.1Z" fill="#fff" stroke="#808080" stroke-width="1"/><path d="M457.1 245.1H460.7L463.3 242.5M460.7 245.1V251.9" fill="none" stroke="#808080" stroke-width="0.8"/><path d="M457.1 257.90000000000003L459.70000000000005 255.3H485.4V262.2L482.79999999999995 264.8H457.1Z" fill="#d4d4d4" stroke="#808080" stroke-width="1"/><path d="M457.1 257.90000000000003H482.79999999999995L485.4 255.3M482.79999999999995 257.90000000000003V264.8" fill="none" stroke="#808080" stroke-width="0.8"/><path d="M457.1 257.90000000000003L459.70000000000005 255.3H470.5V262.2L467.9 264.8H457.1Z" fill="#fff" stroke="#808080" stroke-width="1"/><path d="M457.1 257.90000000000003H467.9L470.5 255.3M467.9 257.90000000000003V264.8" fill="none" stroke="#808080" stroke-width="0.8"/><path d="M503.6 270.8L506.8 268H532.5M506.8 238.5V268" fill="none" stroke="#808080" stroke-width="1"/><path d="M502.5 245.1L505.1 242.5H531.4V249.3L528.8 251.9H502.5Z" fill="#d4d4d4" stroke="#808080" stroke-width="1"/><path d="M502.5 245.1H528.8L531.4 242.5M528.8 245.1V251.9" fill="none" stroke="#808080" stroke-width="0.8"/><path d="M502.5 245.1L505.1 242.5H509.3V249.3L506.7 251.9H502.5Z" fill="#fff" stroke="#808080" stroke-width="1"/><path d="M502.5 245.1H506.7L509.3 242.5M506.7 245.1V251.9" fill="none" stroke="#808080" stroke-width="0.8"/><path d="M502.5 257.90000000000003L505.1 255.3H531.4V262.2L528.8 264.8H502.5Z" fill="#d4d4d4" stroke="#808080" stroke-width="1"/><path d="M502.5 257.90000000000003H528.8L531.4 255.3M528.8 257.90000000000003V264.8" fill="none" stroke="#808080" stroke-width="0.8"/><path d="M502.5 257.90000000000003L505.1 255.3H516V262.2L513.4 264.8H502.5Z" fill="#fff" stroke="#808080" stroke-width="1"/><path d="M502.5 257.90000000000003H513.4L516 255.3M513.4 257.90000000000003V264.8" fill="none" stroke="#808080" stroke-width="0.8"/><path d="M407.6 282.6V294.4H421" fill="none" stroke="#6a6a6a" stroke-width="1"/><rect x="409.3" y="286" width="2.3" height="8" rx="1" fill="#9a9a9a" stroke="#7a7a7a" stroke-width="0.5"/><rect x="411.8" y="288.9" width="2.3" height="5.100000000000023" rx="1" fill="#9a9a9a" stroke="#7a7a7a" stroke-width="0.5"/><rect x="414.4" y="287" width="2.3" height="7" rx="1" fill="#9a9a9a" stroke="#7a7a7a" stroke-width="0.5"/><rect x="416.8" y="283.3" width="2.3" height="10.699999999999989" rx="1" fill="#9a9a9a" stroke="#7a7a7a" stroke-width="0.5"/></svg>
<div style="position:absolute;left:422.5px;top:92.5px;width:175.5px;height:117px;background:rgba(0,0,0,0.08);filter:blur(2px)"></div>
<div style="position:absolute;left:422px;top:92px;width:175.5px;height:117px;background:#fff;border:1px solid #c2c2c2;box-sizing:border-box"></div>
<div style="position:absolute;left:432.50px;top:100.04px;font:bold 10.17px/10.17px 'Liberation Sans',sans-serif;color:#454545;white-space:pre;transform-origin:0 0;-webkit-text-stroke:0.12px #454545;transform:scaleX(0.9078)">Clustered Column</div>
<div style="position:absolute;left:432.50px;top:117.04px;font:normal 10.17px/10.17px 'Liberation Sans',sans-serif;color:#454545;white-space:pre;transform-origin:0 0;-webkit-text-stroke:0.12px #454545;transform:scaleX(0.9407)">Use this chart type to:</div>
<div style="position:absolute;left:432.50px;top:129.54px;font:normal 10.17px/10.17px 'Liberation Sans',sans-serif;color:#454545;white-space:pre;transform-origin:0 0;-webkit-text-stroke:0.12px #454545;transform:scaleX(0.9297)">• Compare values across a few</div>
<div style="position:absolute;left:432.50px;top:141.54px;font:normal 10.17px/10.17px 'Liberation Sans',sans-serif;color:#454545;white-space:pre;transform-origin:0 0;-webkit-text-stroke:0.12px #454545;transform:scaleX(0.9259)">categories.</div>
<div style="position:absolute;left:432.50px;top:165.54px;font:normal 10.17px/10.17px 'Liberation Sans',sans-serif;color:#454545;white-space:pre;transform-origin:0 0;-webkit-text-stroke:0.12px #454545;transform:scaleX(0.9323)">Use it when:</div>
<div style="position:absolute;left:432.50px;top:178.04px;font:normal 10.17px/10.17px 'Liberation Sans',sans-serif;color:#454545;white-space:pre;transform-origin:0 0;-webkit-text-stroke:0.12px #454545;transform:scaleX(0.9518)">• The order of categories is not</div>
<div style="position:absolute;left:432.50px;top:190.04px;font:normal 10.17px/10.17px 'Liberation Sans',sans-serif;color:#454545;white-space:pre;transform-origin:0 0;-webkit-text-stroke:0.12px #454545;transform:scaleX(1.0076)">important.</div></body></html>
